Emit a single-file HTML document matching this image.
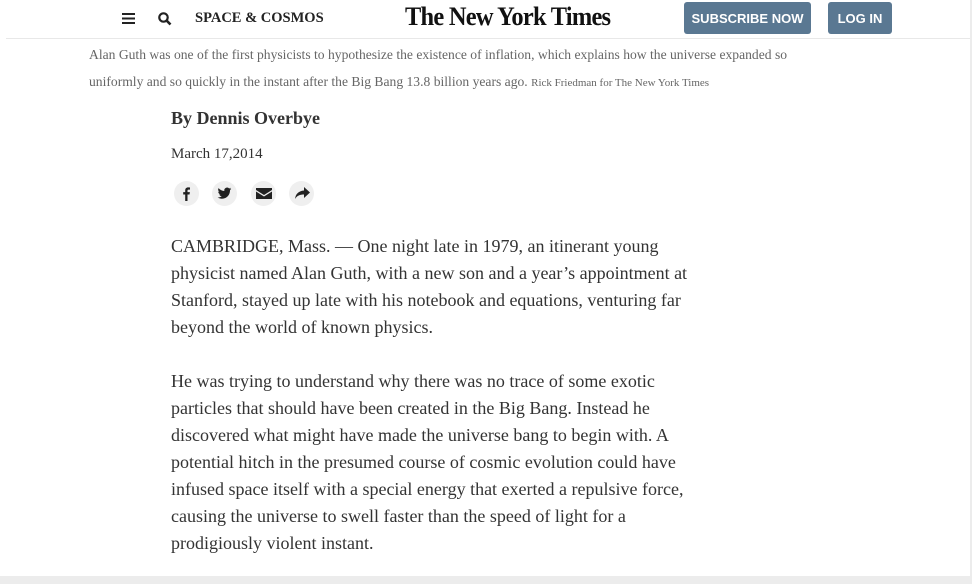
<!DOCTYPE html>
<html><head><meta charset="utf-8"><style>
html,body{margin:0;padding:0;width:972px;height:580px;overflow:hidden;background:#ececec;}
#page{position:absolute;left:0;top:0;width:970px;height:576px;background:#fff;font-family:"Liberation Serif",serif;color:#333;}
.hdr{position:absolute;left:6px;right:0;top:0;height:38px;border-bottom:1px solid #e8e8e8;}
.abs{position:absolute;white-space:nowrap;}
.btn{position:absolute;top:2px;height:32px;background:#5a7892;color:#fff;border-radius:3px;font-family:"Liberation Sans",sans-serif;font-weight:bold;font-size:13px;line-height:33px;text-align:center;}
.cap{position:absolute;left:89px;top:41px;width:730px;font-size:13.6px;line-height:27px;color:#666;}
.cap small{font-size:11px;}
.body{position:absolute;left:171px;top:233px;width:540px;font-size:18px;line-height:27px;color:#333;}
.body p{margin:0 0 27px 0;}
.ic{position:absolute;top:181px;width:25px;height:25px;border-radius:50%;background:#efefef;}
.ic svg{position:absolute;left:5px;top:5px;}
</style></head><body><div id="page">
<div class="hdr">
<svg class="abs" style="left:116px;top:13px" width="13" height="11"><rect y="0" width="13" height="2" fill="#222"/><rect y="4.5" width="13" height="2" fill="#222"/><rect y="9" width="13" height="2" fill="#222"/></svg>
<svg class="abs" style="left:152px;top:12px" width="14" height="14"><circle cx="5.5" cy="5.5" r="4.2" stroke="#222" stroke-width="2.2" fill="none"/><line x1="8.6" y1="8.6" x2="12.5" y2="12.5" stroke="#222" stroke-width="2.6"/></svg>
<div class="abs" style="left:189px;top:10px;font-weight:bold;font-size:14.5px;color:#222;">SPACE &amp; COSMOS</div>
<div class="abs" style="left:399px;top:2px;font-family:'Liberation Serif',serif;font-weight:bold;font-size:26px;letter-spacing:-0.8px;color:#111;transform:scaleX(0.94);transform-origin:left;">The New York Times</div>
<div class="btn" style="left:678px;width:127px;">SUBSCRIBE NOW</div>
<div class="btn" style="left:822px;width:64px;">LOG IN</div>
</div>
<div class="cap">Alan Guth was one of the first physicists to hypothesize the existence of inflation, which explains how the universe expanded so uniformly and so quickly in the instant after the Big Bang 13.8 billion years ago. <small>Rick Friedman for The New York Times</small></div>
<div class="abs" style="left:171px;top:108px;font-weight:bold;font-size:18px;color:#333;">By Dennis Overbye</div>
<div class="abs" style="left:171px;top:146px;font-size:15px;color:#333;">March 17,2014</div>
<div class="ic" style="left:174px"><svg width="15" height="15" viewBox="0 0 15 15"><path d="M8.5 15V8.5h2l.4-2.4H8.5V4.7c0-.7.2-1.1 1.1-1.1H11V1.5c-.3 0-1-.1-1.8-.1-1.9 0-3 1.1-3 3v1.700h-2v2.400h2V15z" fill="#222"/></svg></div>
<div class="ic" style="left:212px"><svg width="15" height="15" viewBox="0 0 24 24"><path d="M23 4.6c-.8.4-1.7.6-2.6.7.9-.6 1.6-1.4 2-2.5-.9.5-1.9.9-2.9 1.1a4.5 4.5 0 00-7.7 4.1C8 7.8 4.7 6 2.5 3.3c-1.2 2-.6 4.6 1.4 6-.7 0-1.4-.2-2-.6 0 2.2 1.5 4.1 3.6 4.5-.7.2-1.4.2-2 .1.6 1.8 2.3 3.1 4.2 3.1A9 9 0 011 18.3c2 1.3 4.4 2 6.9 2 8.3 0 12.9-7 12.9-13v-.6c.9-.6 1.6-1.4 2.2-2.3z" fill="#222"/></svg></div>
<div class="ic" style="left:251px"><svg width="16" height="15" viewBox="0 0 16 15"><path d="M0 2h16v2L8 9 0 4z M0 5.5l8 5 8-5V13H0z" fill="#222"/></svg></div>
<div class="ic" style="left:289px"><svg width="16" height="15" viewBox="0 0 16 15"><path d="M10 1l6 5.5-6 5.5V8.5c-4 0-7 1-9 4.5 .5-5 3.5-8 9-8.5z" fill="#222"/></svg></div>
<div class="body">
<p>CAMBRIDGE, Mass. — One night late in 1979, an itinerant young physicist named Alan Guth, with a new son and a year’s appointment at Stanford, stayed up late with his notebook and equations, venturing far beyond the world of known physics.</p>
<p>He was trying to understand why there was no trace of some exotic particles that should have been created in the Big Bang. Instead he discovered what might have made the universe bang to begin with. A potential hitch in the presumed course of cosmic evolution could have infused space itself with a special energy that exerted a repulsive force, causing the universe to swell faster than the speed of light for a prodigiously violent instant.</p>
</div>
</div></body></html>
